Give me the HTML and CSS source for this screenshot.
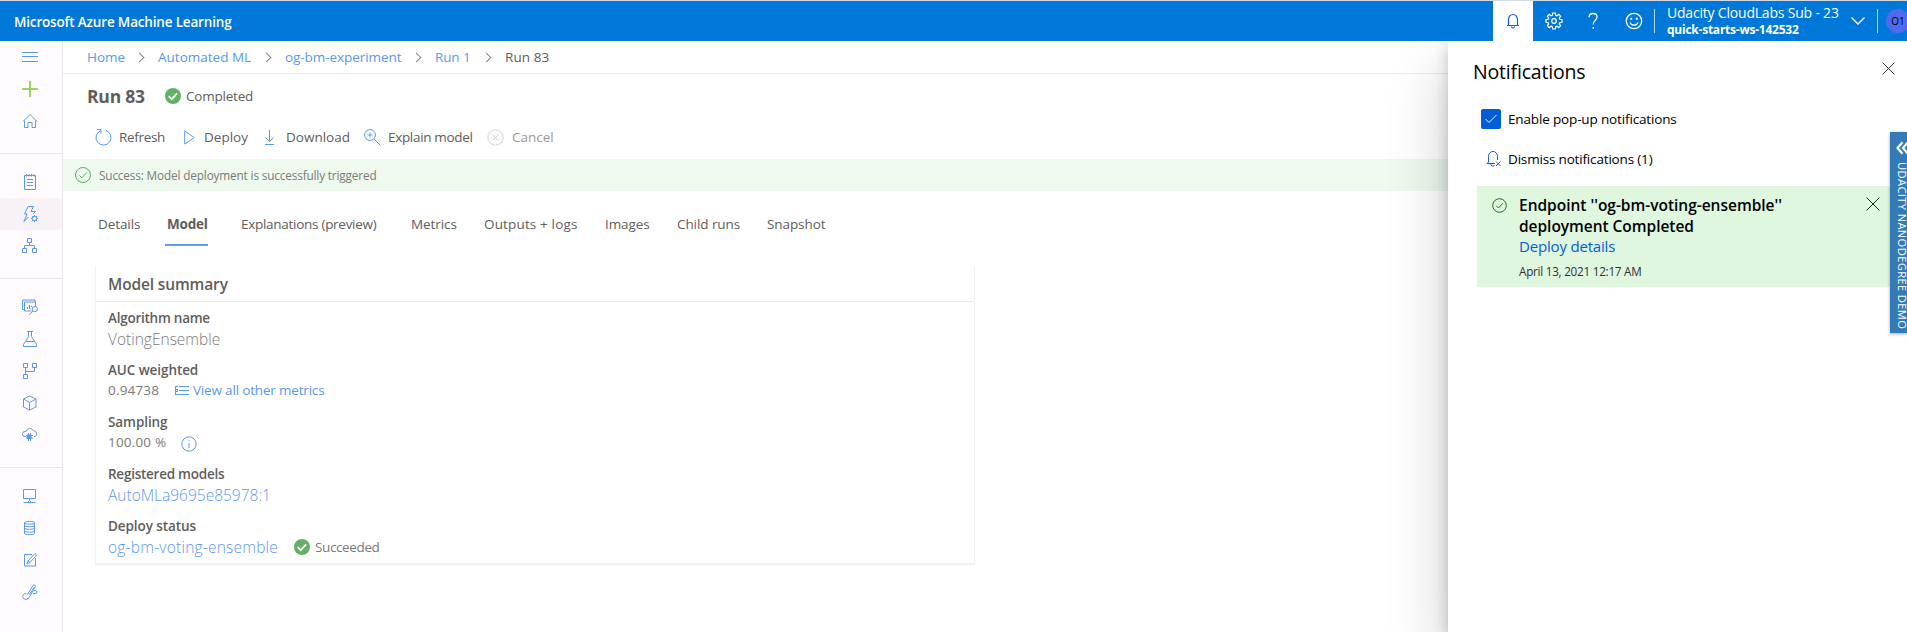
FILE: index.html
```html
<!DOCTYPE html>
<html lang="en">
<head>
<meta charset="utf-8">
<title>Run 83 - Microsoft Azure Machine Learning</title>
<link rel="stylesheet" href="styles.css">
</head>
<body>
<div class="app">
  <header class="topbar">
    <div class="brand">Microsoft Azure Machine Learning</div>
    <div class="top-actions">
      <button class="top-btn bell"><svg width="16" height="16" viewBox="0 0 16 16"><path d="M3.500 12.500V6.500a4.500 5 0 0 1 9 0V12.500M2 12.500h12M6.500 13.500a1.500 1.500 0 0 0 3 0"/></svg></button>
      <button class="top-btn gear"><svg width="18" height="18" viewBox="0 0 18 18"><circle cx="9" cy="9" r="2.300"/><path d="M7.700 1h2.600l.4 2.200 1.200.5 1.900-1.300 1.800 1.800-1.300 1.900.5 1.200 2.200.4v2.600l-2.200.4-.5 1.200 1.300 1.900-1.800 1.800-1.900-1.300-1.200.5-.4 2.200H7.700l-.4-2.200-1.200-.5-1.900 1.300-1.800-1.800 1.300-1.900-.5-1.200L1 10.300V7.700l2.200-.4.5-1.200-1.300-1.900 1.800-1.800 1.900 1.300 1.200-.5z"/></svg></button>
      <button class="top-btn help"><svg width="12" height="18" viewBox="0 0 12 18"><path d="M2 5.200A4 4 0 0 1 6 1.500c2.300 0 4 1.400 4 3.600 0 3.200-3.800 3.400-3.800 7.400M6.200 15v1.800"/></svg></button>
      <button class="top-btn smile"><svg width="18" height="18" viewBox="0 0 18 18"><circle cx="9" cy="9" r="7.700"/><path d="M5 10.500c1.500 3.600 6.500 3.600 8 0"/><path class="dots" d="M5.300 5.800h1.900v1.900H5.300zM10.800 5.800h1.900v1.900h-1.900z"/></svg></button>
      <div class="workspace">
        <div class="sub">Udacity CloudLabs Sub - 23</div>
        <div class="ws">quick-starts-ws-142532</div>
      </div>
      <div class="chev"><svg width="16" height="10" viewBox="0 0 16 10"><path d="M1.500 1.500l6.500 6.500 6.500-6.500"/></svg></div>
      <div class="account"><span class="avatar">O1</span></div>
    </div>
  </header>

  <div class="body">
    <nav class="sidebar">
      <div class="nav-group">
        <a class="nav-item"><svg viewBox="0 0 16 16"><path d="M0 3.500h16M0 7.500h16M0 12.500h16"/></svg></a>
        <a class="nav-item plus"><svg viewBox="0 0 16 16"><path d="M8 0v16M0 8h16"/></svg></a>
        <a class="nav-item"><svg viewBox="0 0 16 16"><path d="M1 8.500L8 1.500l7 7M2.500 7.500v7h3.500v-5h4v5h3.500v-7"/></svg></a>
      </div>
      <div class="nav-group">
        <a class="nav-item"><svg viewBox="0 0 16 16"><path d="M2.500 1.500h11v14h-11zM4.500 0v2.500M7 0v2.500M9.500 0v2.500M12 0v2.500M5 5.500h6M5 8.500h6M5 11.500h6"/></svg></a>
        <a class="nav-item active"><svg viewBox="0 0 16 16"><path d="M11.500.5H6L2.500 8H5l-3 7.500L6.500 11M11.500.5L9 5.500h4.500L11 8"/><circle cx="12.500" cy="12.500" r="2.200"/><path d="M12.500 9v1.300M12.500 14.700v1.300M9 12.500h1.300M14.700 12.500H16M10 10l1 1M15 15l-1-1M15 10l-1 1M10 15l1-1"/></svg></a>
        <a class="nav-item"><svg viewBox="0 0 16 16"><path d="M5.500.5h4v4h-4zM.5 10.500h4v4h-4zM10.500 10.500h4v4h-4zM7.500 4.500v3M2.500 10.500v-3h10v3"/></svg></a>
      </div>
      <div class="nav-group">
        <a class="nav-item"><svg viewBox="0 0 16 16"><path d="M2.500 10.500h-2v-9.500h12.500v2M9.500 12H2.500V3h11v4M5.500 10V8M7.500 10V6M9.500 8V7"/><circle cx="12.800" cy="10" r="2.700"/><path d="M10.800 12.200L7.500 15.700"/></svg></a>
        <a class="nav-item"><svg viewBox="0 0 16 16"><path d="M5 .5h6M6.500.5v5L1.500 13.500v2h13v-2L9.500 5.500v-5M4 10.500h8"/></svg></a>
        <a class="nav-item"><svg viewBox="0 0 16 16"><path d="M1.500.5h4v4h-4zM10.500.5h4v4h-4zM1.500 11.500h4v4h-4zM3.500 4.500v7M12.500 4.500v4h-9"/></svg></a>
        <a class="nav-item"><svg viewBox="0 0 16 16"><path d="M7.500 1L14 4v8l-6.500 3L1.500 12V4zM1.500 4l6 3.500L14 4M7.500 7.500V15"/></svg></a>
        <a class="nav-item"><svg viewBox="0 0 16 16"><path d="M4.500 9.500H3a2.500 2.500 0 0 1 0-5h1a4 4 0 0 1 7.500-.7 3 3 0 0 1 1.500 5.700h-1"/><path class="solid" d="M5 7.500h4.500v4.500H5z"/><path d="M6.500 6v8M8.500 6v8M4 8.500h7M4 11h7"/></svg></a>
      </div>
      <div class="nav-group">
        <a class="nav-item"><svg viewBox="0 0 16 16"><path d="M1.500 1.500h12v9h-12zM7.500 10.500v2M1.500 14.500h4l2-2 2 2h4M5.500 14.500h4"/></svg></a>
        <a class="nav-item"><svg viewBox="0 0 16 16"><path d="M2.500 2.500c0-1.500 10-1.500 10 0v11c0 1.500-10 1.500-10 0zM2.500 3c0 1.500 10 1.500 10 0M2.500 5.500c0 1.500 10 1.500 10 0M2.500 8.200c0 1.500 10 1.500 10 0M2.500 11c0 1.500 10 1.500 10 0"/></svg></a>
        <a class="nav-item"><svg viewBox="0 0 16 16"><path d="M10 2.500H2.500v11.500h11V6M5 12l1-3 7-7.500 1.700 1.500L8 10.500zM6 9l2 1.500"/></svg></a>
        <a class="nav-item"><svg viewBox="0 0 16 16"><path d="M5.500 10.500L11 1.500a1.300 1.300 0 0 1 2.200 1.400L7.500 13M7.500 10.500L12 3.500M12 6.500h1.500a1.500 1.500 0 0 1 0 3H11M7.500 13l-2 2.500"/><path d="M4.500 9.700a2.900 2.900 0 1 0 1.500 4.500"/></svg></a>
      </div>
    </nav>

    <main class="main">
      <div class="crumbs">
        <a>Home</a><i></i><a class="c2">Automated ML</a><i></i><a class="c3">og-bm-experiment</a><i></i><a class="c4">Run 1</a><i></i><span>Run 83</span>
      </div>
      <div class="titlebar">
        <h1>Run 83</h1>
        <svg class="ok" width="16" height="16" viewBox="0 0 16 16"><circle cx="8" cy="8" r="8"/><path d="M3.800 8.200l2.900 2.900 5.500-5.800"/></svg>
        <span>Completed</span>
      </div>
      <div class="toolbar">
        <svg width="17" height="17" viewBox="0 0 17 17"><path d="M5.500 1.700A7.500 7.500 0 1 0 11 1.500M2 .7h4v4"/></svg><span class="tight">Refresh</span>
        <svg width="17" height="17" viewBox="0 0 17 17"><path d="M.7 2v13l9.500-6.500z"/></svg><span class="loose">Deploy</span>
        <svg width="17" height="17" viewBox="0 0 17 17"><path d="M4.500 1v11.500M.5 8.500l4 4.200 4-4.200M0 15.500h9"/></svg><span>Download</span>
        <svg width="17" height="17" viewBox="0 0 17 17"><circle cx="6" cy="6" r="5.400"/><path d="M10 10l6.500 6.500M3.500 6h5M6 3.500v5"/></svg><span class="tight">Explain model</span>
        <svg class="off" width="17" height="17" viewBox="0 0 17 17"><circle cx="8.500" cy="8.500" r="7.700"/><path d="M5.500 5.500l6 6M11.500 5.500l-6 6"/></svg><span class="off">Cancel</span>
      </div>
      <div class="banner">
        <svg width="16" height="16" viewBox="0 0 16 16"><circle cx="8" cy="8" r="7.500"/><path d="M4.300 8.300l2.500 2.500 5-5.300"/></svg>
        <span>Success: Model deployment is successfully triggered</span>
      </div>
      <div class="tabs">
        <a>Details</a><a class="current">Model</a><a class="t3">Explanations (preview)</a><a>Metrics</a><a class="t5">Outputs + logs</a><a>Images</a><a>Child runs</a><a>Snapshot</a>
      </div>
      <section class="card">
        <h2>Model summary</h2>
        <dl>
          <div class="row"><dt class="tight">Algorithm name</dt><dd class="big">VotingEnsemble</dd></div>
          <div class="row"><dt>AUC weighted</dt><dd><span class="num auc">0.94738</span><a class="metrics"><svg width="15" height="10" viewBox="0 0 15 10"><path d="M0 1.500h3M4 1.500h10M4 5.500h10M0 9.500h14M.5 1v8M2.500 4v3M0 4.500h3M0 6.500h3"/></svg>View all other metrics</a></dd></div>
          <div class="row"><dt>Sampling</dt><dd><span class="num pct">100.00 %</span><svg class="info" width="16" height="16" viewBox="0 0 16 16"><circle cx="8" cy="8" r="7.200"/><path d="M8 7v5M8 4.300v1.200"/></svg></dd></div>
          <div class="row"><dt class="tight">Registered models</dt><dd class="big"><a>AutoMLa9695e85978:1</a></dd></div>
          <div class="row"><dt>Deploy status</dt><dd class="big"><a class="endpoint">og-bm-voting-ensemble</a><svg class="ok" width="16" height="16" viewBox="0 0 16 16"><circle cx="8" cy="8" r="8"/><path d="M3.800 8.200l2.900 2.900 5.500-5.800"/></svg><span class="state">Succeeded</span></dd></div>
        </dl>
      </section>
    </main>
  </div>

  <aside class="panel">
    <div class="panel-head">
      <h2>Notifications</h2>
      <svg width="13" height="13" viewBox="0 0 13 13"><path d="M.5.5l12 12M12.500.5l-12 12"/></svg>
    </div>
    <label class="enable"><span class="check"><svg width="12" height="10" viewBox="0 0 12 10"><path d="M.5 5l3.500 3.500L11.500 1"/></svg></span>Enable pop-up notifications</label>
    <div class="dismiss"><svg width="16" height="16" viewBox="0 0 16 16"><path d="M9 12.500H1L2.500 11V5.500a4 4.500 0 0 1 9 0V9M5 12.500a1.700 1.700 0 0 0 3.500 1.500M10 10.500l4.500 4.500M14.500 10.500L10 15"/></svg>Dismiss notifications (1)</div>
    <article class="note">
      <svg class="note-ok" width="15" height="15" viewBox="0 0 15 15"><circle cx="7.500" cy="7.500" r="6.800"/><path d="M4.300 7.800l2.200 2.200 4.300-4.700"/></svg>
      <div class="note-text">
        <h3>Endpoint ''og-bm-voting-ensemble''<br><span>deployment Completed</span></h3>
        <a>Deploy details</a>
        <time>April 13, 2021 12:17 AM</time>
      </div>
      <svg class="note-x" width="14" height="14" viewBox="0 0 14 14"><path d="M.5.5l13 13M13.500.5l-13 13"/></svg>
    </article>
  </aside>

  <div class="side-tab">
    <svg width="14" height="14" viewBox="0 0 14 14"><path d="M6.500 1.200L1.500 7l5 5.800M12 1.200L7 7l5 5.800"/></svg>
    <span>UDACITY NANODEGREE DEMO</span>
  </div>
</div>
</body>
</html>
```
FILE: styles.css
```css
* { box-sizing: border-box; }
body { margin: 0; font-family: "Open Sans", "Noto Sans", sans-serif; font-size: 13.5px; line-height: 20px; color: #5f5d5c; background: #fff; overflow: hidden; }
h1, h2, h3, dl, dd, dt { margin: 0; font-weight: 600; }
svg { fill: none; stroke: currentColor; stroke-width: 1; flex: none; display: block; }
a { color: #5a98ee; text-decoration: none; }
.app { position: relative; width: 1907px; height: 632px; overflow: hidden; display: flex; flex-direction: column; }

.topbar { height: 41px; flex: none; background: #0078d9; border-top: 1px solid #d3dbe8; color: #fff; display: flex; justify-content: space-between; align-items: stretch; }
.brand { padding-left: 14px; font-weight: 600; line-height: 42px; letter-spacing: -.17px; }
.top-actions { display: flex; align-items: center; width: 414px; }
.top-btn { border: 0; padding: 0; background: none; color: #fff; height: 40px; width: 40px; display: flex; align-items: center; justify-content: center; flex: none; }
.top-btn.bell { background: #fff; color: #0b5fe0; }
.top-btn.bell svg { stroke-width: 1.2; }
.top-btn.gear { width: 42px; }
.top-btn.gear svg { stroke-width: 1.2; }
.top-btn.help { width: 36px; }
.top-btn.help svg, .top-btn.smile svg { stroke-width: 1.3; }
.top-btn.smile { width: 43px; padding-left: 3px; }
.top-btn .dots { fill: currentColor; stroke: none; }
.workspace { border-left: 1px solid #b9d6f2; height: 24px; padding-left: 12px; width: 196px; flex: none; display: flex; flex-direction: column; justify-content: center; white-space: nowrap; }
.workspace > div { line-height: 17px; }
.sub { font-size: 14px; letter-spacing: -.2px; }
.ws { font-size: 12px; font-weight: 700; letter-spacing: -.24px; }
.chev { width: 27px; flex: none; }
.chev svg { stroke-width: 1.4; }
.account { border-left: 1px solid #b9d6f2; height: 24px; padding-left: 8px; flex: none; display: flex; align-items: center; }
.avatar { width: 24px; height: 24px; flex: none; border-radius: 50%; background: #4f6bed; color: #000; font-size: 10px; line-height: 24px; text-align: center; }

.body { flex: 1; display: flex; min-height: 0; }
.sidebar { width: 63px; flex: none; background: #fffbff; border-right: 1px solid #ebe6ea; }
.nav-group { padding: 12px 0 16px; border-bottom: 1px solid #ebe6ea; }
.nav-group:first-child { padding-top: 0; }
.nav-group:last-child { border: 0; }
.nav-item { height: 32px; display: flex; align-items: center; padding-left: 22px; color: #5a98ee; }
.nav-item svg { width: 16px; height: 16px; }
.nav-item .solid { fill: currentColor; stroke: none; }
.nav-item.plus { color: #9bd45f; }
.nav-item.plus svg { stroke-width: 2; }
.nav-item.active { background: #f6f2f5; border-radius: 0 3px 3px 0; }

.main { flex: 1; min-width: 0; }
.crumbs { height: 33px; border-bottom: 1px solid #ebe9ea; padding-left: 24px; display: grid; grid-template-columns: 47px 24px 103px 24px 126px 24px 46px 24px auto; justify-content: start; align-items: center; }
.crumbs > * { white-space: nowrap; }
.crumbs i { width: 7px; height: 7px; border: solid #858585; border-width: 1px 1px 0 0; transform: rotate(45deg); margin-left: 2px; }
.crumbs .c3 { letter-spacing: -.06px; }
.crumbs .c4 { letter-spacing: -.12px; }
.crumbs span { letter-spacing: .1px; }

.titlebar { display: flex; align-items: center; height: 44px; padding-left: 24px; }
h1 { font-size: 17.5px; font-weight: 700; width: 78px; letter-spacing: -.2px; line-height: 24px; }
.ok { color: #fff; stroke-width: 1.8; }
.ok circle { fill: #62b065; stroke: none; }
.titlebar span { margin-left: 5px; letter-spacing: -.22px; }

.toolbar { height: 41px; padding: 0 0 3px 32px; display: grid; grid-template-columns: 24px 65px 20px 61px 21px 78px 24px 99px 25px auto; justify-content: start; align-items: center; white-space: nowrap; }
.toolbar svg { color: #5a98ee; }
.toolbar .tight { letter-spacing: -.32px; }
.toolbar .loose { letter-spacing: 0; }
.toolbar svg.off { color: #d3d0d0; }
.toolbar .off { color: #9a9897; }

.banner { height: 32px; background: #eefaee; display: flex; align-items: center; gap: 8px; padding-left: 12px; font-size: 11.8px; letter-spacing: -.16px; color: #7b7a79; }
.banner svg { color: #5cae60; }

.tabs { height: 75px; padding: 11px 0 0 35px; display: grid; grid-template-columns: 69px 74px 170px 73px 121px 72px 90px auto; justify-content: start; align-items: start; white-space: nowrap; }
.tabs a { color: #5f5d5c; height: 44px; line-height: 44px; letter-spacing: -.08px; }
.tabs .current { font-weight: 700; margin-left: -2px; padding-left: 2px; width: 43px; border-bottom: 2px solid #5f9bf0; letter-spacing: -.2px; }
.tabs .t3 { letter-spacing: -.28px; }
.tabs .t5 { letter-spacing: .15px; }

.card { margin-left: 32px; width: 880px; height: 298px; border: solid #f8f1f3; border-width: 0 1px 1px; box-shadow: 0 1px 1px #f3eff1; }
.card h2 { height: 36px; line-height: 37px; padding-left: 12px; font-size: 15.5px; letter-spacing: -.14px; border-bottom: 1px solid #ebe9ea; }
.card dl { padding: 6px 12px 0; }
.row { height: 52px; }
.row dt { height: 20px; letter-spacing: -.08px; }
.row dt.tight { letter-spacing: -.25px; }
.row dd { height: 20px; display: flex; align-items: center; color: #7b7a79; font-weight: 400; }
.row .big { font-size: 15.5px; font-weight: 300; padding-top: 1px; height: 21px; }
.num { letter-spacing: .18px; }
.auc { width: 67px; }
.pct { width: 73px; }
.metrics { display: flex; align-items: center; gap: 3px; letter-spacing: -.18px; }
.info { color: #5a98ee; margin-top: 3px; }
.endpoint { width: 186px; letter-spacing: .22px; }
.state { font-size: 13.5px; font-weight: 400; margin-left: 5px; letter-spacing: -.38px; }

.panel { position: absolute; top: 41px; right: 0; bottom: 0; width: 459px; background: #fff; color: #000; box-shadow: 0 26px 58px rgba(0,0,0,.2), 0 5px 14px rgba(0,0,0,.2); clip-path: inset(0 0 0 -60px); }
.panel-head { display: flex; justify-content: space-between; padding: 17px 12px 0 25px; height: 62px; }
.panel-head h2 { font-size: 19.5px; font-weight: 400; line-height: 28px; letter-spacing: -.18px; }
.panel-head svg { margin-top: 4px; color: #333; }
.enable { display: flex; align-items: center; height: 32px; padding-left: 33px; gap: 7px; letter-spacing: -.15px; }
.check { width: 20px; height: 20px; border-radius: 2px; background: #015cda; color: #fff; display: flex; align-items: center; justify-content: center; }
.dismiss { display: flex; align-items: center; height: 32px; margin-top: 8px; padding-left: 38px; gap: 6px; letter-spacing: -.17px; }
.dismiss svg { color: #0b5fe0; }
.note { margin: 11px 0 0 29px; height: 101px; background: #dff6df; display: flex; align-items: flex-start; padding: 9px 0 0 15px; }
.note-ok { color: #107c10; margin-top: 3px; }
.note-text { width: 359px; padding-left: 12px; display: flex; flex-direction: column; }
.note h3 { font-size: 15.5px; line-height: 21px; letter-spacing: -.02px; white-space: nowrap; }
.note h3 span { letter-spacing: -.04px; }
.note a { font-size: 15px; line-height: 21px; letter-spacing: -.18px; color: #015cda; margin-top: -1px; }
.note time { font-size: 11.7px; line-height: 16px; margin-top: 6px; letter-spacing: -.25px; color: #323130; }
.note-x { margin-top: 2px; color: #222; }

.side-tab { position: absolute; left: 1890px; top: 132px; width: 17px; height: 201px; background: #337ab7; color: #fff; box-shadow: 0 1px 3px rgba(0,0,0,.35); padding: 9px 0 0 6px; }
.side-tab svg { stroke-width: 2.2; }
.side-tab span { display: block; writing-mode: vertical-rl; margin: 7px 0 0 1px; font-size: 11.2px; line-height: 10px; white-space: nowrap; letter-spacing: .35px; }
```
